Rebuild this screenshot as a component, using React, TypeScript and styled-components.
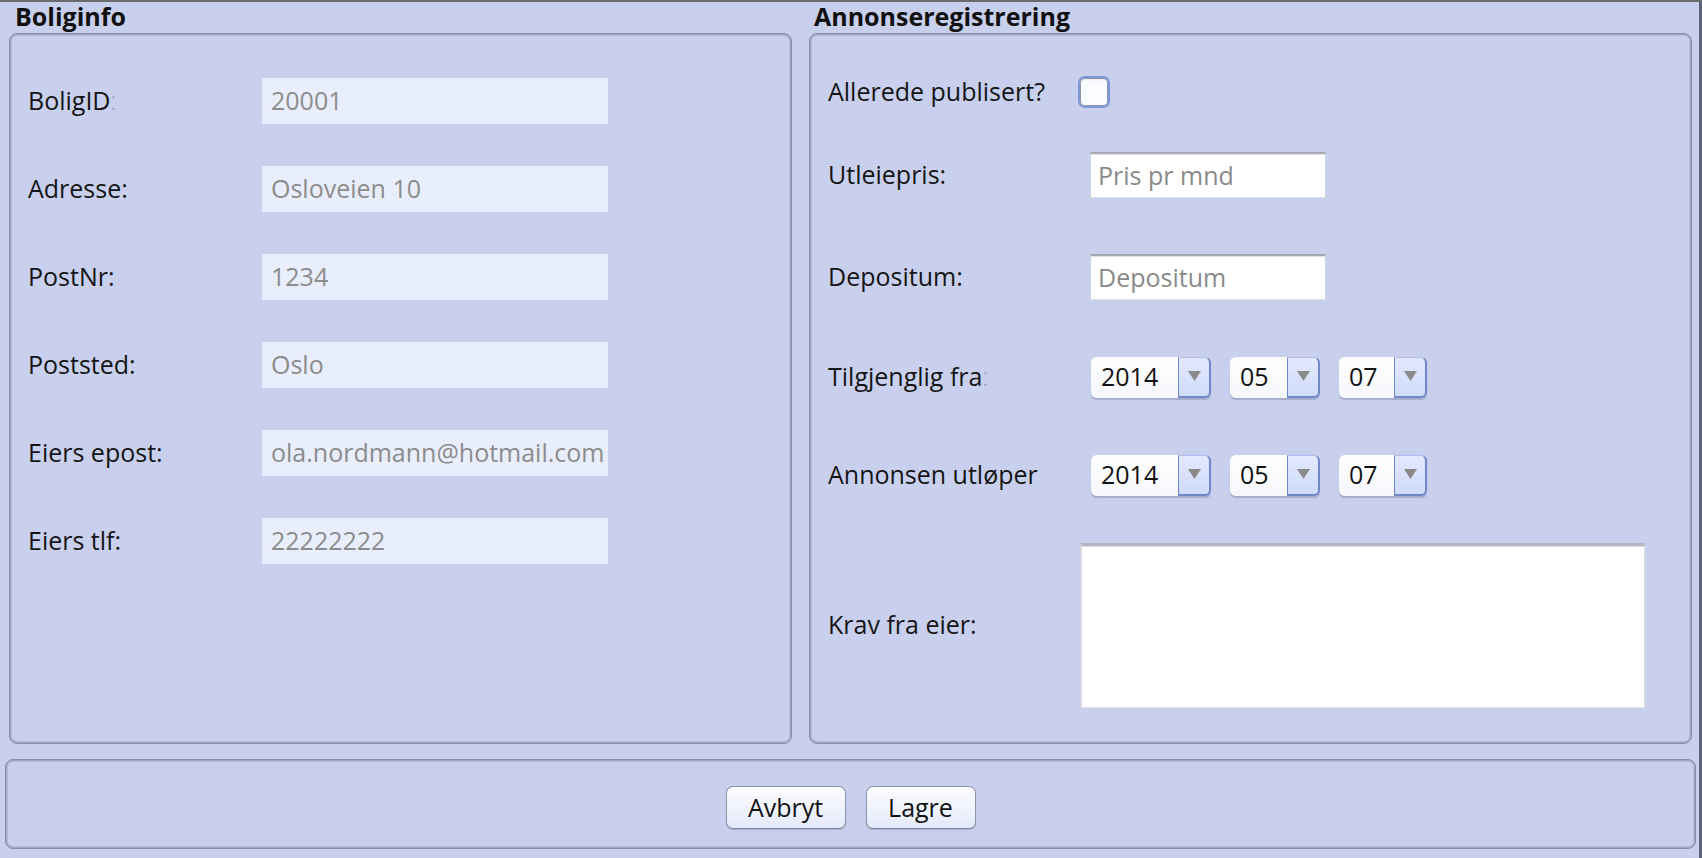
import React from 'react';
import styled, { createGlobalStyle } from 'styled-components';

const Global = createGlobalStyle`
  html, body { margin: 0; padding: 0; }
  body {
    width: 1702px;
    height: 858px;
    overflow: hidden;
    background: #c8d0ee;
    font-family: "Open Sans", "Noto Sans", "DejaVu Sans", sans-serif;
    color: #151515;
  }
`;

const Window = styled.div`
  width: 1702px;
  height: 858px;
  box-sizing: border-box;
  background: #c8d0ee;
  border-top: 2px solid #6b6b6b;
  border-right: 3px solid #5d6278;
  display: flex;
  flex-direction: column;
`;

const Columns = styled.div`
  display: grid;
  grid-template-columns: 783px 883px;
  column-gap: 17px;
  padding-left: 9px;
`;

const Column = styled.section`
  display: flex;
  flex-direction: column;
`;

const Title = styled.h2<{ $indent: number }>`
  margin: 0;
  height: 31px;
  line-height: 29px;
  padding-left: ${(p) => p.$indent}px;
  font-size: 25px;
  font-weight: 700;
  color: #111;
`;

const Panel = styled.div`
  box-sizing: border-box;
  height: 711px;
  border: 1px solid #868ea7;
  border-radius: 8px;
  box-shadow: inset 0 0 0 1px #9ea6c1, inset 0 0 0 2px #b5bdd9;
`;

const InfoGrid = styled(Panel)`
  display: grid;
  grid-template-columns: 234px 346px;
  grid-auto-rows: 46px;
  row-gap: 42px;
  align-content: start;
  padding: 44px 0 0 18px;
`;

const Label = styled.span`
  font-size: 25px;
  color: #151515;
  white-space: nowrap;
  align-self: center;
  margin-bottom: 2px;
`;

const Clip = styled.span`
  color: #9aa0b4;
  font-weight: 300;
`;

const ReadOnlyField = styled.div`
  box-sizing: border-box;
  height: 46px;
  background: #e8eefc;
  color: #8c8c8c;
  font-size: 25px;
  padding: 0 0 2px 9px;
  display: flex;
  align-items: center;
  white-space: nowrap;
  overflow: hidden;
`;

const AdPanel = styled(Panel)`
  display: flex;
  flex-direction: column;
  padding: 26px 0 0 18px;
`;

const Row = styled.div<{ $h: number }>`
  height: ${(p) => p.$h}px;
  display: flex;
  align-items: center;
`;

const RowLabel = styled(Label)`
  width: 250px;
  flex: none;
`;

const Control = styled.div<{ $offset: number }>`
  margin-left: ${(p) => p.$offset}px;
  display: flex;
  align-items: center;
`;

const CheckBox = styled.div`
  box-sizing: border-box;
  width: 32px;
  height: 32px;
  border-radius: 7px;
  border: 2px solid #7c98d2;
  background: #fbfcff;
  box-shadow: inset 0 0 0 1px #8f95a6, inset 0 2px 2px #e6e9f2;
`;

const TextField = styled.div`
  box-sizing: border-box;
  width: 236px;
  height: 46px;
  background: #fff;
  border-top: 2px solid #a5a9b3;
  border-left: 1px solid #cfd2da;
  border-right: 1px solid #cfd2da;
  border-bottom: 1px solid #dcdee6;
  box-shadow: inset 0 1px 0 #e2e4ea;
  padding: 0 0 2px 7px;
  display: flex;
  align-items: center;
  font-size: 25px;
  color: #8a8a8a;
`;

const ComboGroup = styled.div`
  display: flex;
  gap: 19px;
`;

const Combo = styled.div<{ $w: number }>`
  box-sizing: border-box;
  width: ${(p) => p.$w}px;
  height: 41px;
  display: flex;
  border-radius: 6px;
  box-shadow: 0 2px 1px rgba(120, 128, 160, 0.45);
`;

const ComboValue = styled.div`
  flex: 1;
  background: linear-gradient(#ffffff, #f6f7fb);
  border-radius: 6px 0 0 6px;
  padding: 0 0 2px 10px;
  display: flex;
  align-items: center;
  font-size: 25px;
  color: #111;
`;

const ComboArrow = styled.div`
  box-sizing: border-box;
  width: 33px;
  background: linear-gradient(#e3e9fd, #d0dbfa);
  border-left: 1px solid #6f86c9;
  border-right: 2px solid #6f86c9;
  border-bottom: 2px solid #6f86c9;
  border-top: 1px solid #aebdf0;
  border-radius: 0 6px 6px 0;
  display: flex;
  align-items: center;
  justify-content: center;
  padding-bottom: 2px;
`;

const TextArea = styled.div`
  box-sizing: border-box;
  width: 566px;
  height: 165px;
  background: #fff;
  border-top: 3px solid #b3b8c4;
  border-left: 2px solid #d6d9e4;
  border-right: 2px solid #d6d9e4;
  border-bottom: 1px solid #dfe2ea;
  box-shadow: inset 0 1px 0 #dde0e7;
`;

const ButtonBar = styled(Panel)`
  height: 90px;
  width: 1691px;
  margin: 15px 0 0 5px;
  display: flex;
  justify-content: center;
  align-items: center;
  gap: 20px;
  padding-top: 7px;
`;

const Button = styled.button<{ $w: number }>`
  box-sizing: border-box;
  width: ${(p) => p.$w}px;
  height: 43px;
  border: 1px solid #8d94a7;
  border-bottom-color: #7d8497;
  border-radius: 7px;
  background: linear-gradient(#fdfdff, #e4eafb);
  box-shadow: 0 1px 1px rgba(110, 118, 150, 0.35);
  font-family: inherit;
  font-size: 25px;
  color: #111;
  padding: 0 0 2px;
  display: flex;
  align-items: center;
  justify-content: center;
`;

const Arrow = () => (
  <svg width="13" height="10" viewBox="0 0 13 10">
    <path d="M0 0 H13 L6.5 10 Z" fill="#8a8a8a" />
  </svg>
);

const DateCombo = ({ y, m, d }: { y: string; m: string; d: string }) => (
  <ComboGroup>
    <Combo $w={120}>
      <ComboValue>{y}</ComboValue>
      <ComboArrow><Arrow /></ComboArrow>
    </Combo>
    <Combo $w={90}>
      <ComboValue>{m}</ComboValue>
      <ComboArrow><Arrow /></ComboArrow>
    </Combo>
    <Combo $w={88}>
      <ComboValue>{d}</ComboValue>
      <ComboArrow><Arrow /></ComboArrow>
    </Combo>
  </ComboGroup>
);

const info: [React.ReactNode, string][] = [
  [<>BoligID<Clip>:</Clip></>, '20001'],
  ['Adresse:', 'Osloveien 10'],
  ['PostNr:', '1234'],
  ['Poststed:', 'Oslo'],
  ['Eiers epost:', 'ola.nordmann@hotmail.com'],
  ['Eiers tlf:', '22222222'],
];

export default function App() {
  return (
    <>
      <Global />
      <Window>
        <Columns>
          <Column>
            <Title $indent={6}>Boliginfo</Title>
            <InfoGrid>
              {info.map(([label, value], i) => (
                <React.Fragment key={i}>
                  <Label>{label}</Label>
                  <ReadOnlyField>{value}</ReadOnlyField>
                </React.Fragment>
              ))}
            </InfoGrid>
          </Column>
          <Column>
            <Title $indent={5}>Annonseregistrering</Title>
            <AdPanel>
              <Row $h={64}>
                <RowLabel>Allerede publisert?</RowLabel>
                <Control $offset={0}><CheckBox /></Control>
              </Row>
              <Row $h={102}>
                <RowLabel>Utleiepris:</RowLabel>
                <Control $offset={12}><TextField>Pris pr mnd</TextField></Control>
              </Row>
              <Row $h={102}>
                <RowLabel>Depositum:</RowLabel>
                <Control $offset={12}><TextField>Depositum</TextField></Control>
              </Row>
              <Row $h={98}>
                <RowLabel>Tilgjenglig fra<Clip>:</Clip></RowLabel>
                <Control $offset={13}><DateCombo y="2014" m="05" d="07" /></Control>
              </Row>
              <Row $h={98}>
                <RowLabel>Annonsen utløper</RowLabel>
                <Control $offset={13}><DateCombo y="2014" m="05" d="07" /></Control>
              </Row>
              <Row $h={202}>
                <RowLabel>Krav fra eier:</RowLabel>
                <Control $offset={2}><TextArea /></Control>
              </Row>
            </AdPanel>
          </Column>
        </Columns>
        <ButtonBar>
          <Button $w={120}>Avbryt</Button>
          <Button $w={110}>Lagre</Button>
        </ButtonBar>
      </Window>
    </>
  );
}
